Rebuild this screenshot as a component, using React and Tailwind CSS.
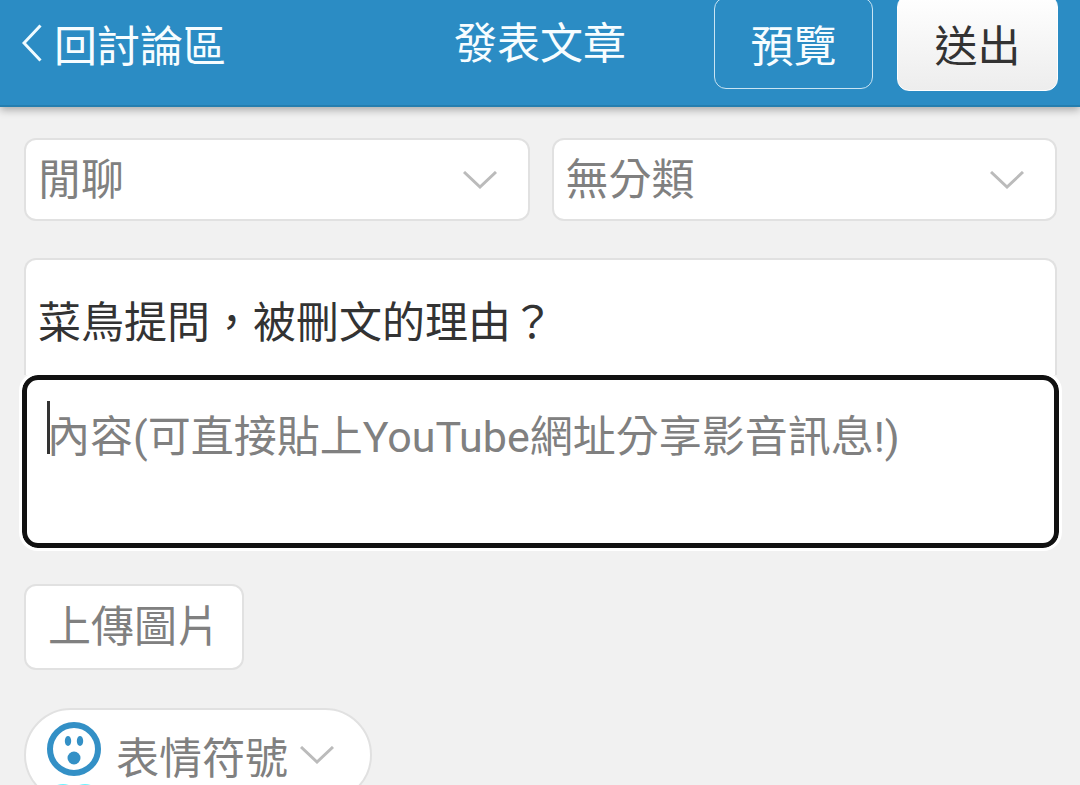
import React, { useState } from 'react'
import { clsx } from 'clsx'

const BOARDS = ['閒聊', '問題', '心得', '情報']
const CATEGORIES = ['無分類', '討論', '分享']

const fieldCls = 'border-2 border-[#e1e1e1] bg-white text-[#808080]'

function ChevronDown({ className }) {
  return (
    <svg viewBox="0 0 34 18" className={clsx('w-[34px] h-[18px]', className)} fill="none" stroke="#bbbbbb" strokeWidth="3" aria-hidden="true">
      <path d="M1 1 L17 16 L33 1" />
    </svg>
  )
}

function ChevronLeft() {
  return (
    <svg viewBox="0 0 20 38" className="w-5 h-[38px] mb-1" fill="none" stroke="#f0fbff" strokeWidth="3" aria-hidden="true">
      <path d="M18.500 1.500 L2 19 L18.500 36.500" />
    </svg>
  )
}

function SurprisedFace() {
  return (
    <svg viewBox="0 0 56 68" className="w-14 h-[68px] shrink-0" aria-hidden="true">
      <circle cx="28" cy="28" r="24" fill="none" stroke="#3390c6" strokeWidth="6" />
      <ellipse cx="22" cy="20" rx="3.200" ry="5" fill="#3390c6" />
      <ellipse cx="34" cy="20" rx="3.200" ry="5" fill="#3390c6" />
      <circle cx="28" cy="37" r="6.500" fill="#3390c6" />
      <path d="M7 66 Q17 60 27 66 Z M29 66 Q39 60 49 66 Z" fill="#6df3ff" />
    </svg>
  )
}

function SelectField({ label, options, value, onChange }) {
  return (
    <div className="relative flex-1">
      <select
        aria-label={label}
        value={value}
        onChange={e => onChange(e.target.value)}
        className={clsx(fieldCls, 'block w-full h-[83px] appearance-none rounded-xl pl-3 pr-20 outline-none')}
      >
        {options.map(o => <option key={o}>{o}</option>)}
      </select>
      <ChevronDown className="absolute right-[33px] top-1/2 -translate-y-1/2 pointer-events-none" />
    </div>
  )
}

export default function App() {
  const [board, setBoard] = useState(BOARDS[0])
  const [category, setCategory] = useState(CATEGORIES[0])
  const [title, setTitle] = useState('菜鳥提問，被刪文的理由？')
  const [content, setContent] = useState('')

  return (
    <div className="h-screen overflow-hidden bg-[#f1f1f1] font-['Roboto','Noto_Sans_CJK_TC',sans-serif] text-[43px] leading-[50px]">
      {/* Header, slightly scrolled under the top edge */}
      <header className="relative -mt-5 h-[127px] px-[22px] grid grid-cols-[1fr_auto_1fr] items-center bg-[#2b8cc4] text-[#f7fdff] border-b-2 border-[#257eaf] shadow-[0_3px_8px_rgba(0,0,0,0.3)]">
        <a href="#forum" className="flex items-center gap-3 pt-1">
          <ChevronLeft />
          <span className="pt-1">回討論區</span>
        </a>
        <h1 className="pt-[2px]">發表文章</h1>
        <div className="flex items-center justify-end gap-6">
          <button type="button" className="h-[92px] w-[159px] rounded-xl border border-[#c9e4f3] pt-2">預覽</button>
          <button type="submit" form="post" className="h-[96px] w-[161px] rounded-xl border border-white bg-linear-to-b from-white to-[#ededed] text-[#333333] pt-2">送出</button>
        </div>
      </header>

      <form id="post" className="pl-6 pr-[23px] pt-[31px]" onSubmit={e => e.preventDefault()}>
        <div className="flex gap-[22px]">
          <SelectField label="看板" options={BOARDS} value={board} onChange={setBoard} />
          <SelectField label="分類" options={CATEGORIES} value={category} onChange={setCategory} />
        </div>

        {/* Title + content */}
        <input
          type="text"
          aria-label="標題"
          value={title}
          onChange={e => setTitle(e.target.value)}
          className="block w-full h-[117px] mt-[37px] pt-[2px] px-3 rounded-t-xl border-2 border-b-0 border-[#e1e1e1] bg-white text-[#333333] outline-none"
        />
        <div className="relative -mx-[2px]">
          <textarea
            aria-label="內容"
            value={content}
            onChange={e => setContent(e.target.value)}
            placeholder="內容(可直接貼上YouTube網址分享影音訊息!)"
            className="block w-full h-[173px] resize-none overflow-hidden rounded-2xl border-[5px] border-[#111111] bg-white pt-8 px-5 text-[#333333] placeholder:text-[#808080] caret-transparent outline-3 outline-white"
          />
          {content === '' && <span className="absolute left-[25px] top-[26px] w-[3px] h-[53px] bg-[#333333]" />}
        </div>

        <button type="button" className={clsx(fieldCls, 'block h-[86px] mt-9 px-[22px] rounded-xl')}>上傳圖片</button>

        <button type="button" className={clsx(fieldCls, 'flex items-center h-[94px] mt-[38px] pl-5 pr-9 rounded-full')}>
          <SurprisedFace />
          <span className="ml-[14px] pt-2">表情符號</span>
          <ChevronDown className="ml-3" />
        </button>
      </form>
    </div>
  )
}
